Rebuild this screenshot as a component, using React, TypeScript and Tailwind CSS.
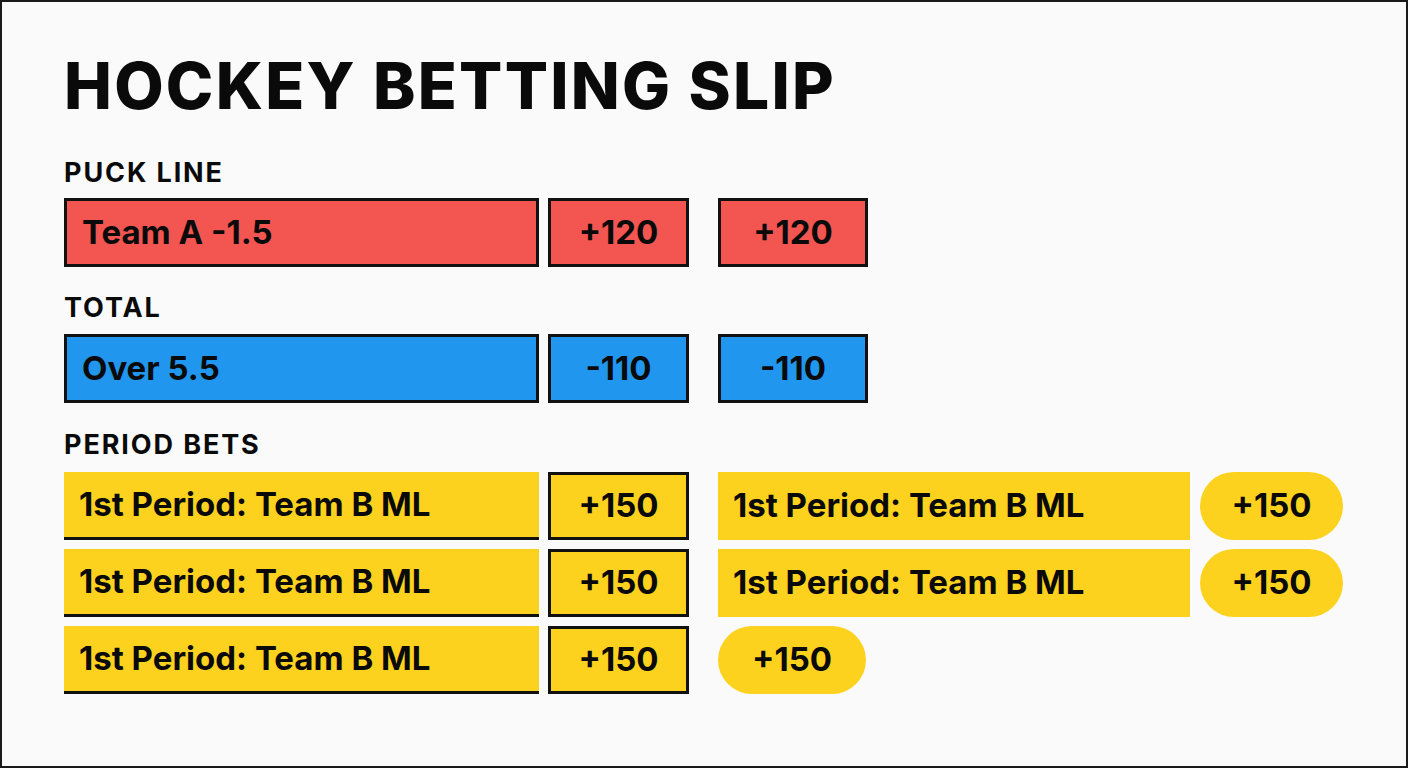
import React from 'react';

type Tone = 'red' | 'blue';

const toneBg: Record<Tone, string> = {
  red: 'bg-[#f35551]',
  blue: 'bg-[#2196ee]',
};

const LineRow = ({ label, odds, tone }: { label: string; odds: string; tone: Tone }) => (
  <div className="flex h-[69px]">
    <div className={`${toneBg[tone]} w-[475px] border-[3px] border-[#111] flex items-center pl-[15px] text-[33px] font-bold`}>
      {label}
    </div>
    <div className={`${toneBg[tone]} ml-[9px] w-[141px] border-[3px] border-[#111] flex items-center justify-center text-[33px] font-bold`}>
      {odds}
    </div>
    <div className={`${toneBg[tone]} ml-[29px] w-[150px] border-[3px] border-[#111] flex items-center justify-center text-[33px] font-bold`}>
      {odds}
    </div>
  </div>
);

const SectionLabel = ({ children }: { children: React.ReactNode }) => (
  <div className="text-[27px] font-bold leading-none tracking-[0.07em]">{children}</div>
);

const Pill = ({ odds, wide }: { odds: string; wide?: boolean }) => (
  <div className={`${wide ? 'w-[148px]' : 'w-[143px]'} h-full rounded-full bg-[#fcd21e] flex items-center justify-center text-[33px] font-bold`}>
    {odds}
  </div>
);

const PeriodLeft = () => (
  <>
    <div className="w-[475px] bg-[#fcd21e] border-b-[3px] border-[#111] flex items-center pl-[15px] text-[33px] font-bold">
      1st Period: Team B ML
    </div>
    <div className="ml-[9px] w-[141px] bg-[#fcd21e] border-[3px] border-[#111] flex items-center justify-center text-[33px] font-bold">
      +150
    </div>
  </>
);

const PeriodRow = ({ full }: { full: boolean }) => (
  <div className="flex h-[68px]">
    <PeriodLeft />
    <div className="ml-[29px] flex h-full">
      {full ? (
        <>
          <div className="w-[472px] bg-[#fcd21e] flex items-center pl-[15px] text-[33px] font-bold">
            1st Period: Team B ML
          </div>
          <div className="ml-[10px] h-full">
            <Pill odds="+150" />
          </div>
        </>
      ) : (
        <Pill odds="+150" wide />
      )}
    </div>
  </div>
);

export default function App() {
  return (
    <div
      className="w-[1408px] h-[768px] bg-[#fafafa] border-2 border-[#1a1a1a] text-[#0a0a0a] pl-[62px] pt-[52px]"
      style={{ fontFamily: 'Inter, "Noto Sans", sans-serif' }}
    >
      <h1 className="text-[64px] font-extrabold leading-none tracking-[0.035em]">HOCKEY BETTING SLIP</h1>

      <div className="mt-[41px]">
        <SectionLabel>PUCK LINE</SectionLabel>
        <div className="mt-[12px]">
          <LineRow label="Team A -1.5" odds="+120" tone="red" />
        </div>
      </div>

      <div className="mt-[27px]">
        <SectionLabel>TOTAL</SectionLabel>
        <div className="mt-[13px]">
          <LineRow label="Over 5.5" odds="-110" tone="blue" />
        </div>
      </div>

      <div className="mt-[28px]">
        <SectionLabel>PERIOD BETS</SectionLabel>
        <div className="mt-[14px] flex flex-col gap-[9px]">
          <PeriodRow full />
          <PeriodRow full />
          <PeriodRow full={false} />
        </div>
      </div>
    </div>
  );
}
